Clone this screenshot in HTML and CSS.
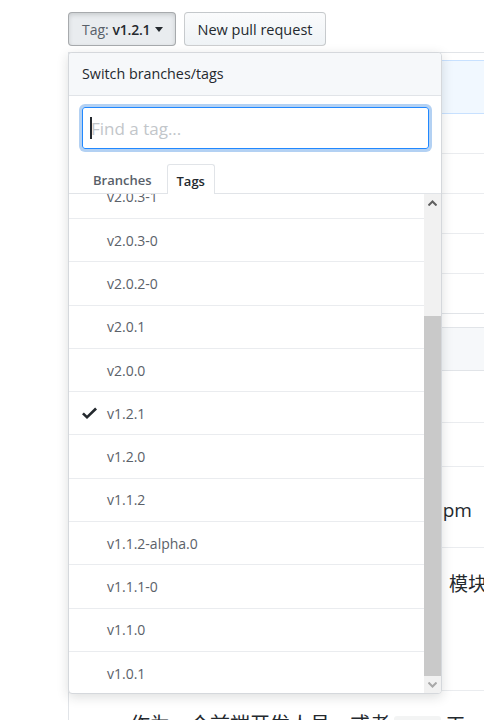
FILE: index.html
```html
<!DOCTYPE html>
<html lang="en">
<head>
<meta charset="utf-8">
<title>Switch branches/tags</title>
<link rel="stylesheet" href="styles.css">
</head>
<body>
<div class="page">
  <div class="toolbar">
    <button class="btn btn-select"><span class="muted">Tag:</span>&nbsp;<span class="strong">v1.2.1</span><span class="caret"></span></button>
    <button class="btn btn-pr">New pull request</button>
  </div>
  <div class="stage">
    <div class="files">
      <div class="commit-tease"></div>
      <div class="file-row"></div>
      <div class="file-row"></div>
      <div class="file-row"></div>
      <div class="file-row"></div>
      <div class="file-row"></div>
    </div>
    <div class="readme">
      <div class="readme-head"></div>
      <div class="rd rd-a"></div>
      <div class="rd rd-b"></div>
      <div class="rd rd-c"><span class="npm">npm</span></div>
      <div class="rd rd-d"><span class="mk">模块</span></div>
      <p class="rd-p">作为一个前端开发人员，或者 <code>npm</code> 工</p>
    </div>

    <div class="dropdown">
      <div class="dd-header">Switch branches/tags</div>
      <div class="dd-filter">
        <div class="dd-input"><span class="dd-caret"></span><span class="dd-placeholder">Find a tag...</span></div>
      </div>
      <div class="dd-tabs">
        <span class="tab">Branches</span>
        <span class="tab tab-active">Tags</span>
      </div>
      <div class="dd-list">
        <div class="dd-items">
          <ul class="items">
            <li class="item"><span class="chk"></span>v2.0.3-1</li>
            <li class="item"><span class="chk"></span>v2.0.3-0</li>
            <li class="item"><span class="chk"></span>v2.0.2-0</li>
            <li class="item"><span class="chk"></span>v2.0.1</li>
            <li class="item"><span class="chk"></span>v2.0.0</li>
            <li class="item"><span class="chk"><svg width="15" height="12" viewBox="0 3 12 10" preserveAspectRatio="none"><path d="M12 5l-8 8-4-4 1.5-1.5L4 10l6.5-6.5L12 5z" fill="#24292e"/></svg></span>v1.2.1</li>
            <li class="item"><span class="chk"></span>v1.2.0</li>
            <li class="item"><span class="chk"></span>v1.1.2</li>
            <li class="item"><span class="chk"></span>v1.1.2-alpha.0</li>
            <li class="item"><span class="chk"></span>v1.1.1-0</li>
            <li class="item"><span class="chk"></span>v1.1.0</li>
            <li class="item"><span class="chk"></span>v1.0.1</li>
          </ul>
        </div>
        <div class="scrollbar">
          <div class="sb-btn"><svg width="9" height="6" viewBox="0 0 9 6"><path d="M0.5 5.5L4.5 1.5L8.5 5.5" fill="none" stroke="#606060" stroke-width="2"/></svg></div>
          <div class="sb-track"><div class="sb-thumb"></div></div>
          <div class="sb-btn"><svg width="9" height="6" viewBox="0 0 9 6"><path d="M0.5 0.5L4.5 4.5L8.5 0.5" fill="none" stroke="#a8a8a8" stroke-width="2"/></svg></div>
        </div>
      </div>
    </div>
  </div>
</div>
</body>
</html>
```

FILE: styles.css
```css
html, body {
  margin: 0;
  padding: 0;
  background: #fff;
  overflow: hidden;
}

body {
  font-family: "Open Sans", "Noto Sans", "Liberation Sans", sans-serif;
  font-size: 14px;
  color: #24292e;
}

.page {
  padding: 12px 0 0 68px;
}

.toolbar {
  display: flex;
  gap: 8px;
  height: 34px;
}

.btn {
  box-sizing: border-box;
  height: 34px;
  display: inline-flex;
  align-items: center;
  padding: 0 12px;
  font-family: inherit;
  font-size: 14px;
  color: #24292e;
  white-space: nowrap;
  border: 1px solid rgba(27, 31, 35, 0.2);
  border-radius: 4px;
  background: linear-gradient(#fafbfc, #eff3f6);
}

.btn-select {
  width: 108px;
  padding: 0 0 0 13px;
  background: #e9ecef;
  border-color: rgba(27, 31, 35, 0.32);
  box-shadow: inset 0 2px 4px rgba(27, 31, 35, 0.15);
}

.btn-pr {
  width: 142px;
  padding: 0;
  justify-content: center;
  font-size: 14.5px;
}

.muted {
  color: #586069;
}

.strong {
  font-weight: 600;
  letter-spacing: -0.2px;
}

.caret {
  width: 0;
  height: 0;
  margin-left: 5px;
  border-top: 5px solid #24292e;
  border-left: 4px solid transparent;
  border-right: 4px solid transparent;
}

.stage {
  position: relative;
  margin-top: 6px;
}

/* background file box */
.files {
  border-top: 1px solid #e1e4e8;
  border-left: 1px solid #e1e4e8;
  padding-top: 7px;
}

.commit-tease {
  box-sizing: border-box;
  height: 54px;
  background: #f1f8ff;
  border-top: 1px solid #c8e1ff;
  border-bottom: 1px solid #c8e1ff;
}

.file-row {
  box-sizing: border-box;
  height: 40px;
  border-bottom: 1px solid #eaecef;
}

.file-row:last-child {
  border-bottom-color: #e1e4e8;
}

.readme {
  margin-top: 13px;
  border-top: 1px solid #e1e4e8;
  border-left: 1px solid #e1e4e8;
}

.readme-head {
  box-sizing: border-box;
  height: 43px;
  background: #f6f8fa;
  border-bottom: 1px solid #e1e4e8;
}

.rd {
  box-sizing: border-box;
  border-bottom: 1px solid #eaecef;
  font-size: 19px;
  color: #24292e;
}

.rd-a { height: 52px; }
.rd-b { height: 44px; }

.rd-c {
  height: 81px;
  padding: 30px 0 0 362px;
  line-height: 26px;
}

.rd-d {
  height: 143px;
  padding: 21px 0 0 380px;
  line-height: 28px;
  font-family: "Noto Sans CJK SC", sans-serif;
  white-space: nowrap;
}

.rd-p {
  margin: 0;
  padding: 18px 0 0 61px;
  font-family: "Noto Sans CJK SC", sans-serif;
  font-size: 20px;
  line-height: 30px;
  white-space: nowrap;
  color: #24292e;
}

.rd-p code {
  font-family: "Liberation Mono", monospace;
  font-size: 17px;
  background: #f3f4f4;
  padding: 2px 8px;
  border-radius: 3px;
}

/* dropdown */
.dropdown {
  position: absolute;
  top: 0;
  left: 0;
  z-index: 10;
  box-sizing: border-box;
  width: 374px;
  height: 642px;
  display: flex;
  flex-direction: column;
  background: #fff;
  border: 1px solid #d5d8dc;
  border-radius: 4px;
  box-shadow: 0 3px 12px rgba(27, 31, 35, 0.15);
  overflow: hidden;
}

.dd-header {
  box-sizing: border-box;
  height: 43px;
  flex: none;
  padding-left: 13px;
  line-height: 42px;
  background: #f6f8fa;
  border-bottom: 1px solid #e1e4e8;
  color: #24292e;
  font-size: 14.3px;
}

.dd-filter {
  flex: none;
  padding: 11px 12px 0 13px;
}

.dd-input {
  box-sizing: border-box;
  height: 42px;
  display: flex;
  align-items: center;
  padding-left: 7px;
  border: 1px solid #2188ff;
  border-radius: 3px;
  box-shadow: 0 0 0 3px rgba(3, 102, 214, 0.3);
}

.dd-caret {
  width: 2px;
  height: 22px;
  background: #24292e;
  margin-right: -1px;
}

.dd-placeholder {
  font-size: 17px;
  color: #c2c6ca;
}

.dd-tabs {
  flex: none;
  display: flex;
  gap: 5px;
  margin-top: 15px;
  padding-left: 14px;
  height: 29px;
  border-bottom: 1px solid #e1e4e8;
}

.tab {
  box-sizing: border-box;
  height: 29px;
  padding: 0 10px;
  line-height: 33px;
  font-size: 13px;
  font-weight: 600;
  color: #586069;
}

.tab-active {
  height: 30px;
  padding: 0 9px;
  color: #24292e;
  background: #fff;
  border: 1px solid #e1e4e8;
  border-bottom: none;
  border-radius: 3px 3px 0 0;
}

.dd-list {
  flex: 1;
  min-height: 0;
  display: flex;
}

.dd-items {
  flex: 1;
  overflow: hidden;
}

.items {
  list-style: none;
  margin: -18.3px 0 0;
  padding: 0;
}

.item {
  box-sizing: border-box;
  height: 43.3px;
  display: flex;
  align-items: center;
  padding-left: 13px;
  border-bottom: 1px solid #eaecef;
  color: #5b6169;
}

.chk {
  width: 25px;
  display: flex;
  align-items: center;
}

.scrollbar {
  flex: none;
  width: 17px;
  display: flex;
  flex-direction: column;
  background: #f1f1f1;
}

.sb-btn {
  flex: none;
  height: 17px;
  display: flex;
  align-items: center;
  justify-content: center;
}

.sb-track {
  flex: 1;
  display: flex;
  flex-direction: column;
  padding-top: 105px;
}

.sb-thumb {
  flex: 1;
  background: #c9c9c9;
}
```
